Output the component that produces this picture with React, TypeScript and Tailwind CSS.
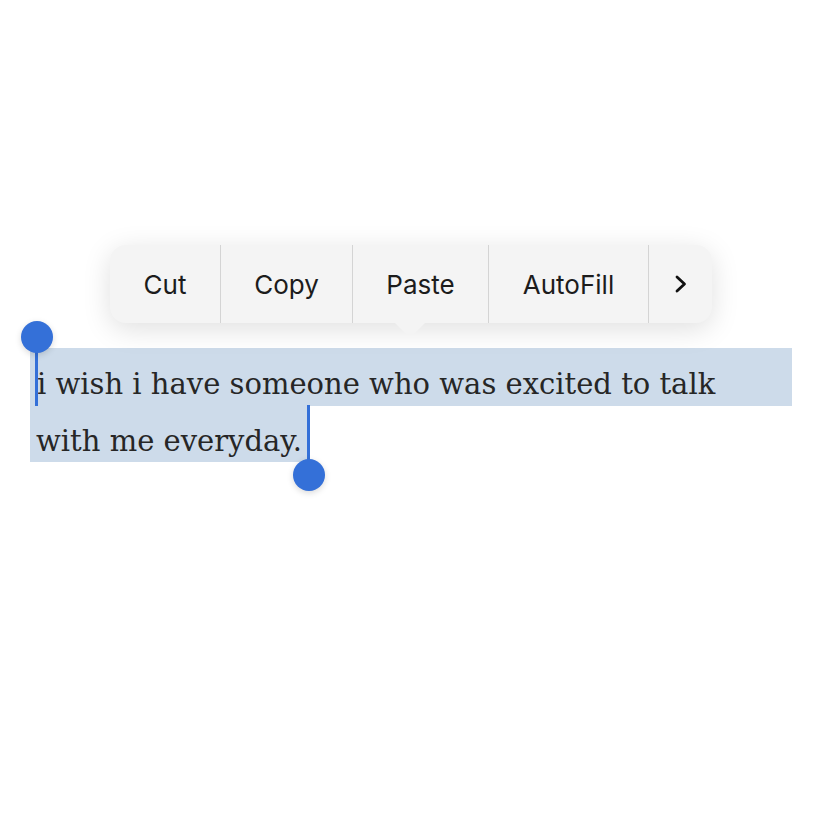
import React from "react";

const serif = { fontFamily: '"DejaVu Serif", "Liberation Serif", serif' };

export default function App() {
  const cells = [
    { label: "Cut", w: "w-[111px]" },
    { label: "Copy", w: "w-[132px]" },
    { label: "Paste", w: "w-[136px]" },
    { label: "AutoFill", w: "w-[160px]" },
  ];
  return (
    <div className="relative w-[828px] h-[828px] bg-white overflow-hidden">
      <div className="pt-[348px] pl-[30px] text-[29px] text-[#262626] leading-none" style={serif}>
        <div className="relative w-[762px] h-[58px] bg-[#cddbea] pl-[7px] pt-[22px]">
          <span>i wish i have someone who was excited to talk</span>
          {/* start handle */}
          <div className="absolute left-[5px] -top-[11px] w-[3px] h-[69px] bg-[#3470d8]" />
          <div className="absolute -left-[9px] -top-[27px] w-[32px] h-[32px] rounded-full bg-[#3470d8] shadow-[0_2px_6px_rgba(0,0,0,0.15)]" />
        </div>
        <div className="relative w-[280px] h-[56px] bg-[#cddbea] pl-[6px] pt-[21px]">
          <span>with me everyday.</span>
          {/* end handle */}
          <div className="absolute left-[277px] -top-[1px] w-[3px] h-[66px] bg-[#3470d8]" />
          <div className="absolute left-[263px] top-[53px] w-[32px] h-[32px] rounded-full bg-[#3470d8] shadow-[0_2px_6px_rgba(0,0,0,0.15)]" />
        </div>
      </div>

      {/* menu */}
      <div className="absolute left-[110px] top-[245px]">
        <div
          className="flex h-[78px] rounded-[16px] bg-[#f4f4f4] shadow-[0_6px_28px_rgba(0,0,0,0.13)] overflow-hidden"
          style={{ fontFamily: 'Inter, "Liberation Sans", sans-serif' }}
        >
          {cells.map((c) => (
            <div
              key={c.label}
              className={`${c.w} h-full flex items-center justify-center border-r border-[#d4d4d4] text-[26px] text-[#1c1c1c]`}
            >
              {c.label}
            </div>
          ))}
          <div className="w-[63px] h-full flex items-center justify-center">
            <svg width="14" height="20" viewBox="0 0 14 20" fill="none">
              <path d="M3 3 L10.5 10 L3 17" stroke="#111" strokeWidth="2.8" strokeLinecap="round" strokeLinejoin="round" />
            </svg>
          </div>
        </div>
        <svg className="absolute left-[284px] top-[77px]" width="32" height="15" viewBox="0 0 32 15">
          <path d="M0 0 L11 11 Q16 15 21 11 L32 0 Z" fill="#f4f4f4" />
        </svg>
      </div>
    </div>
  );
}
